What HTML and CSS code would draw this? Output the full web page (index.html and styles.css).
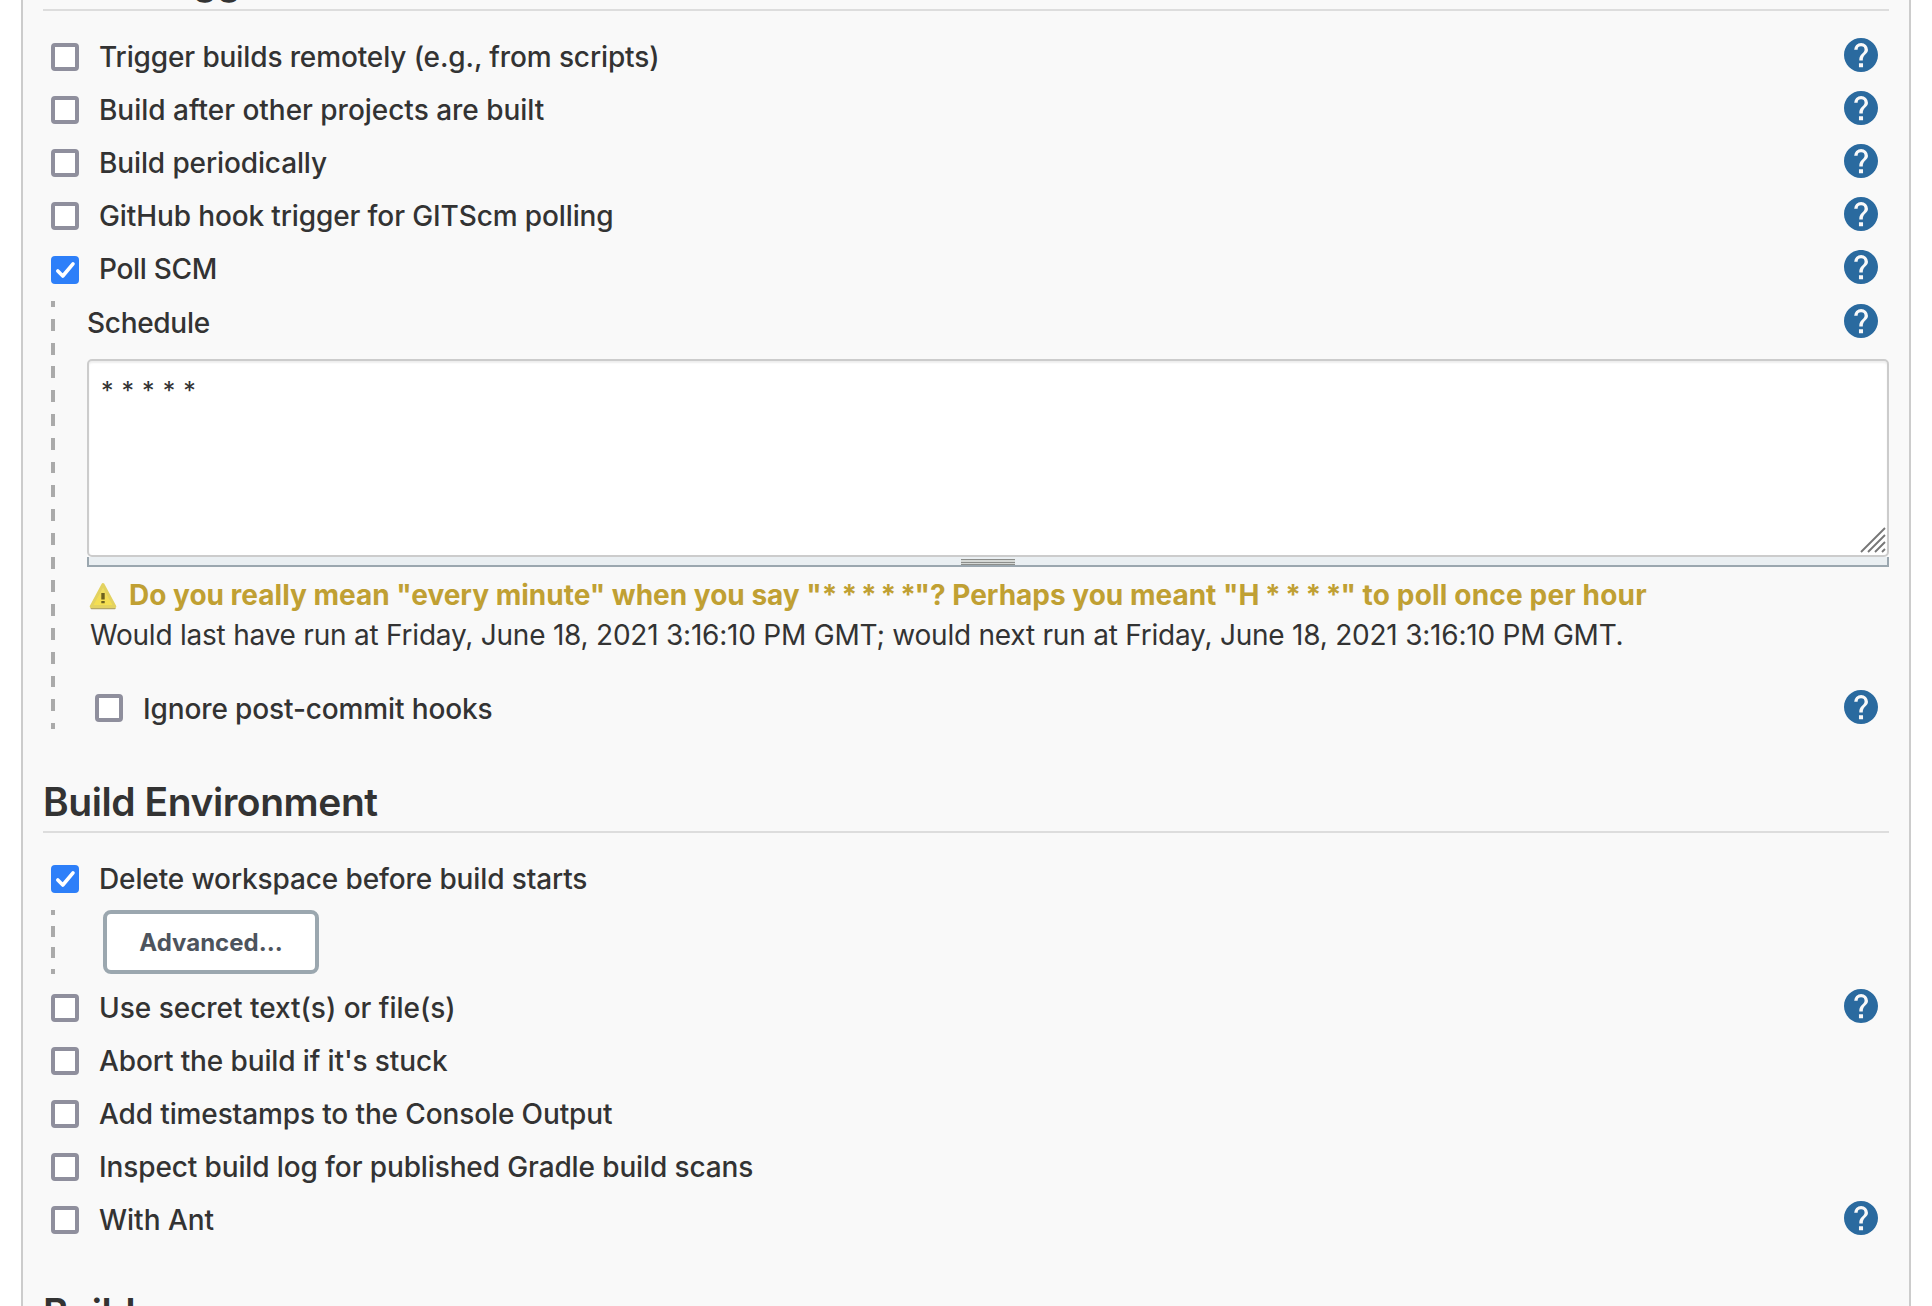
FILE: index.html
```html
<!DOCTYPE html>
<html lang="en">
<head>
<meta charset="utf-8">
<title>Job configuration</title>
<link rel="stylesheet" href="styles.css">
</head>
<body>
<svg class="sprite" width="0" height="0">
  <symbol id="help" viewBox="2 2 20 20"><path d="M12 2C6.480 2 2 6.480 2 12s4.480 10 10 10 10-4.480 10-10S17.520 2 12 2zm1.200 17.200h-2.400v-2.300h2.400zm2-8.200l-1 1c-.7.750-1.150 1.500-1.150 3.300h-2.050v-.6c0-1.200.5-2.300 1.200-3l1.300-1.350c.4-.36.6-.86.6-1.400a2.050 2.050 0 0 0-4.100 0H8a4.050 4.050 0 0 1 8.100 0c0 .8-.35 1.500-.9 2.050z"/></symbol>
  <symbol id="tick" viewBox="0 0 28 28"><path d="M6.800 15l5 5L22 7.800" fill="none" stroke="#fff" stroke-width="3.600" stroke-linecap="round" stroke-linejoin="round"/></symbol>
</svg>
<main class="panel">
  <section>
    <h2 class="heading first">Build Triggers</h2>
    <div class="rows">
      <div class="row"><span class="box"></span><span class="label">Trigger builds remotely (e.g., from scripts)</span><svg class="help"><use href="#help"/></svg></div>
      <div class="row"><span class="box"></span><span class="label wide">Build after other projects are built</span><svg class="help"><use href="#help"/></svg></div>
      <div class="row"><span class="box"></span><span class="label">Build periodically</span><svg class="help"><use href="#help"/></svg></div>
      <div class="row"><span class="box"></span><span class="label">GitHub hook trigger for GITScm polling</span><svg class="help"><use href="#help"/></svg></div>
      <div class="row"><span class="box checked low"><svg><use href="#tick"/></svg></span><span class="label tight">Poll SCM</span><svg class="help"><use href="#help"/></svg></div>
    </div>
    <div class="nested poll">
      <div class="row schedule"><span class="label tight">Schedule</span><svg class="help"><use href="#help"/></svg></div>
      <div class="textarea">* * * * *<svg class="grip" viewBox="0 0 26 26"><path d="M1 25L25 1M8 25L25 8M15 25L25 15M22 25l3-3"/></svg></div>
      <div class="resizer"><span class="handle"></span></div>
      <div class="warning">
        <svg class="warn" viewBox="0 0 28 28">
          <defs><linearGradient id="y" x1="0" y1="0" x2="0" y2="1"><stop offset="0" stop-color="#eadf70"/><stop offset=".6" stop-color="#f3dd55"/><stop offset="1" stop-color="#f5e04f"/></linearGradient></defs>
          <path d="M2.500 26.200h23.200" stroke="#b5a765" stroke-width="2" stroke-linecap="round"/>
          <path d="M14 2.500L25.800 24.400H2.200z" fill="url(#y)" stroke="#e3d260" stroke-width="3" stroke-linejoin="round"/>
          <path d="M14 11v6.500M14 19v2.200" stroke="#6d6220" stroke-width="3.400"/>
        </svg>
        <span class="warning-text">Do you really mean "every minute" when you say "<span class="stars">* * * * *</span>"? Perhaps you meant "H<span class="stars short"> * * * *</span>" <span class="tail">to poll once per hour</span></span>
      </div>
      <div class="info">Would last have run at Friday, June 18, 2021 3:16:10 PM GMT; would next run at Friday, June 18, 2021 3:16:10 PM GMT.</div>
      <div class="row ignore"><span class="box"></span><span class="label">Ignore post-commit hooks</span><svg class="help"><use href="#help"/></svg></div>
    </div>
  </section>
  <section>
    <h2 class="heading env">Build Environment</h2>
    <div class="rows">
      <div class="row"><span class="box checked"><svg><use href="#tick"/></svg></span><span class="label">Delete workspace before build starts</span></div>
    </div>
    <div class="nested advanced"><button class="button">Advanced...</button></div>
    <div class="rows rest">
      <div class="row"><span class="box"></span><span class="label wide">Use secret text(s) or file(s)</span><svg class="help"><use href="#help"/></svg></div>
      <div class="row"><span class="box"></span><span class="label">Abort the build if it's stuck</span></div>
      <div class="row"><span class="box"></span><span class="label">Add timestamps to the Console Output</span></div>
      <div class="row"><span class="box"></span><span class="label">Inspect build log for published Gradle build scans</span></div>
      <div class="row"><span class="box"></span><span class="label wide">With Ant</span><svg class="help"><use href="#help"/></svg></div>
    </div>
  </section>
  <section>
    <h2 class="heading build">Build</h2>
  </section>
</main>
</body>
</html>
```
FILE: styles.css
```css
* { box-sizing: border-box; }
body {
  margin: 0;
  height: 1306px;
  overflow: hidden;
  background: #fff;
  color: #333;
  font-family: Inter, "Liberation Sans", sans-serif;
  font-size: 28px;
}
.sprite { position: absolute; }
.panel {
  height: 1306px;
  margin: 0 21px;
  padding: 0 20px;
  overflow: hidden;
  border: solid #ccc;
  border-width: 0 2px;
  background: #f9f9f9;
}
.heading {
  height: 60px;
  margin: 0;
  border-bottom: 2px solid #ddd;
  font-size: 39px;
  font-weight: 600;
  line-height: 58px;
  letter-spacing: -0.440px;
  white-space: nowrap;
}
.heading.first { margin-top: -49px; }
.heading.env { margin-top: 44px; }
.heading.build { margin-top: 38px; }
.rows { padding: 19px 11px 0 8px; }
.row {
  display: flex;
  align-items: flex-start;
  height: 53px;
}
.box {
  flex: none;
  width: 28px;
  height: 28px;
  margin: 13px 20px 0 0;
  border: 4px solid #8f8f9d;
  border-radius: 4px;
  background: #fff;
}
.box.checked { border: 0; background: #2d7ff9; }
.box.low { margin-top: 14px; }
.box svg { display: block; width: 28px; height: 28px; }
.label {
  flex: 1;
  font-weight: 500;
  line-height: 55px;
  letter-spacing: -0.120px;
  white-space: nowrap;
}
.label.wide { letter-spacing: -0.020px; }
.label.tight { letter-spacing: -0.300px; }
.help {
  flex: none;
  width: 34px;
  height: 34px;
  margin-top: 8px;
  fill: #2a6a9f;
}
.nested {
  margin-left: 8px;
  background: repeating-linear-gradient(#aaa 0 calc(var(--period) / 4), transparent 0 calc(var(--period) * .75), #aaa 0 var(--period)) 0 0 / 4px 100% no-repeat;
}
.poll {
  --period: 23.778px;
  height: 428px;
  margin-top: 6px;
  padding-left: 36px;
}
.schedule {
  height: 58px;
  padding-right: 11px;
}
.schedule .label { line-height: 45px; }
.schedule .help { margin-top: 3px; }
.textarea {
  position: relative;
  height: 198px;
  padding: 12px 12px;
  border: 2px solid #ccc;
  border-radius: 5px;
  background: #fff;
  box-shadow: inset 0 2px 2px rgba(0, 0, 0, .07);
  font-size: 25px;
  line-height: 36px;
  letter-spacing: 0.500px;
}
.grip {
  position: absolute;
  right: 1px;
  bottom: 2px;
  width: 26px;
  height: 26px;
  fill: none;
  stroke: #777;
  stroke-width: 1.900;
}
.resizer {
  display: flex;
  justify-content: center;
  height: 10px;
  padding-top: 2px;
  border: 2px solid #9ba7af;
  border-top: 0;
  background: #eaeff2;
}
.handle {
  width: 54px;
  height: 6px;
  background: linear-gradient(#8c8e8b 0 1px, #d5d8d5 0 3px, #8c8e8b 0 4px, #d5d8d5 0 5px, #8c8e8b 0);
}
.warning {
  display: flex;
  height: 46px;
  padding: 15px 0 0 2px;
}
.warn { flex: none; width: 28px; height: 28px; }
.warning-text {
  margin: -5px 0 0 12px;
  color: #c0a033;
  font-weight: 700;
  line-height: 36px;
  white-space: nowrap;
}
.stars { letter-spacing: -1.350px; }
.stars.short { letter-spacing: -1px; }
.tail { letter-spacing: 0.170px; }
.info {
  height: 69px;
  padding-left: 3px;
  line-height: 45px;
  letter-spacing: -0.220px;
  white-space: nowrap;
}
.ignore { padding: 0 11px 0 8px; }
.ignore .box { margin-top: 12px; }
.advanced {
  --period: 21.333px;
  height: 64px;
  margin-top: 5px;
  padding-left: 52px;
}
.button {
  display: block;
  width: 216px;
  height: 64px;
  padding: 2px 0 0;
  border: 4px solid #9ba7af;
  border-radius: 8px;
  background: #fff;
  color: #4d545d;
  font: 700 24px/54px Inter, "Liberation Sans", sans-serif;
}
.rest { padding-top: 7px; }
```
